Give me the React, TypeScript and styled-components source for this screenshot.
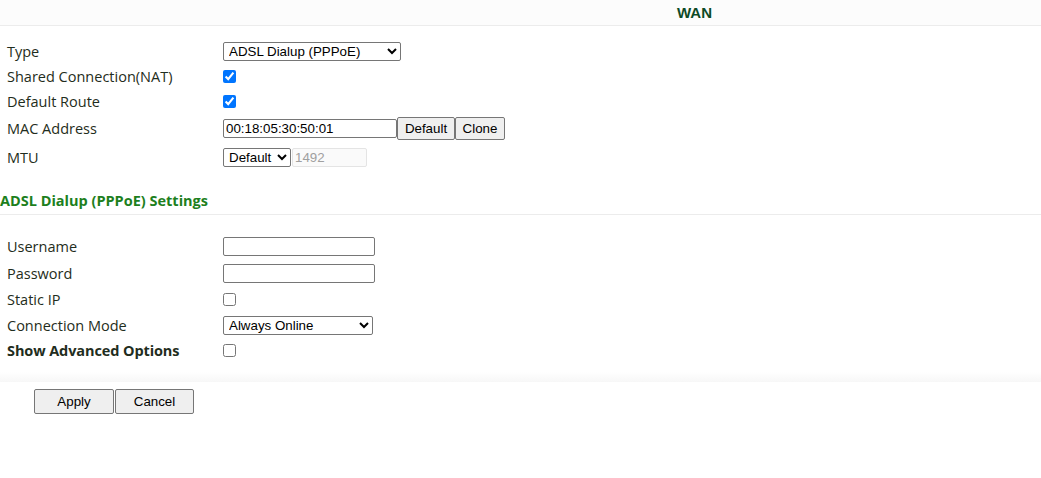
import React from "react";
import styled, { createGlobalStyle } from "styled-components";

const Global = createGlobalStyle`
  html, body { margin: 0; padding: 0; background: #fff; }
  body { font-family: "Open Sans", "Noto Sans", sans-serif; }
`;

const Page = styled.div`
  width: 1041px;
  min-height: 478px;
  display: flex;
  flex-direction: column;
`;

const Header = styled.div`
  height: 26px;
  background: #fcfcfc;
  border-bottom: 1px solid #ececec;
  display: flex;
  align-items: center;
  padding-left: 677px;
  box-sizing: border-box;
`;

const HeaderTitle = styled.h1`
  margin: 0;
  font-family: "Liberation Sans", Arial, sans-serif;
  font-size: 15px;
  font-weight: bold;
  color: #0d4a26;
`;

const Form = styled.div<{ $top: number }>`
  display: flex;
  flex-direction: column;
  padding-top: ${(p) => p.$top}px;
`;

const Row = styled.div<{ $h: number }>`
  display: grid;
  grid-template-columns: 223px 1fr;
  align-items: center;
  height: ${(p) => p.$h}px;
`;

const Label = styled.span<{ $bold?: boolean }>`
  padding-left: 7px;
  font-size: 14.5px;
  font-weight: ${(p) => (p.$bold ? 700 : 400)};
  letter-spacing: ${(p) => (p.$bold ? "-0.1px" : "0")};
  color: #1f2d20;
  white-space: nowrap;
`;

const Cell = styled.div`
  display: flex;
  align-items: center;
`;

const Select = styled.select<{ $w: number }>`
  width: ${(p) => p.$w}px;
  height: 19px;
  font-family: "Liberation Sans", Arial, sans-serif;
  font-size: 13.33px;
  color: #000;
  background: #fff;
  border: 1px solid #767676;
  border-radius: 2px;
  padding: 0 0 0 1px;
  margin: 0;
`;

const TextInput = styled.input<{ $w: number; $gap?: number }>`
  width: ${(p) => p.$w}px;
  height: 19px;
  box-sizing: border-box;
  font-family: "Liberation Sans", Arial, sans-serif;
  font-size: 13.33px;
  color: #000;
  border: 1px solid #767676;
  border-radius: 2px;
  padding: 0 2px;
  margin: 0 0 0 ${(p) => p.$gap ?? 0}px;
  &:disabled {
    color: #a0a0a0;
    background: #fafafa;
    border-color: #e4e4e4;
  }
`;

const Check = styled.input`
  width: 13px;
  height: 13px;
  margin: 0;
  accent-color: #0075ff;
`;

const Button = styled.button<{ $w: number; $h: number; $gap?: number }>`
  width: ${(p) => p.$w}px;
  height: ${(p) => p.$h}px;
  font-family: "Liberation Sans", Arial, sans-serif;
  font-size: 13.33px;
  color: #000;
  background: #efefef;
  border: 1px solid #767676;
  border-radius: 2px;
  padding: 0;
  margin: 0 0 0 ${(p) => p.$gap ?? 0}px;
`;

const SectionTitle = styled.div`
  margin-top: 14px;
  height: 28px;
  display: flex;
  align-items: center;
  border-bottom: 1px solid #ececec;
  font-size: 14.5px;
  font-weight: 700;
  color: #1d7f1d;
`;

const Footer = styled.div`
  margin-top: 10px;
  display: flex;
  flex-direction: column;
`;

const FooterBand = styled.div`
  height: 10px;
  background: linear-gradient(#ffffff, #f7f7f7);
`;

const FooterButtons = styled.div`
  padding: 7px 0 0 34px;
  display: flex;
`;

export default function App() {
  return (
    <Page>
      <Global />
      <Header>
        <HeaderTitle>WAN</HeaderTitle>
      </Header>
      <Form $top={13}>
        <Row $h={25}>
          <Label>Type</Label>
          <Cell>
            <Select $w={178} defaultValue="pppoe">
              <option value="pppoe">ADSL Dialup (PPPoE)</option>
              <option value="dhcp">DHCP</option>
              <option value="static">Static IP</option>
            </Select>
          </Cell>
        </Row>
        <Row $h={25}>
          <Label>Shared Connection(NAT)</Label>
          <Cell>
            <Check type="checkbox" defaultChecked />
          </Cell>
        </Row>
        <Row $h={25}>
          <Label>Default Route</Label>
          <Cell>
            <Check type="checkbox" defaultChecked />
          </Cell>
        </Row>
        <Row $h={29}>
          <Label>MAC Address</Label>
          <Cell>
            <TextInput $w={174} defaultValue="00:18:05:30:50:01" />
            <Button $w={58} $h={23}>Default</Button>
            <Button $w={50} $h={23}>Clone</Button>
          </Cell>
        </Row>
        <Row $h={29}>
          <Label>MTU</Label>
          <Cell>
            <Select $w={68} defaultValue="default">
              <option value="default">Default</option>
              <option value="manual">Manual</option>
            </Select>
            <TextInput $w={75} $gap={1} defaultValue="1492" disabled />
          </Cell>
        </Row>
      </Form>
      <SectionTitle>ADSL Dialup (PPPoE) Settings</SectionTitle>
      <Form $top={18}>
        <Row $h={27}>
          <Label>Username</Label>
          <Cell>
            <TextInput $w={152} defaultValue="" />
          </Cell>
        </Row>
        <Row $h={27}>
          <Label>Password</Label>
          <Cell>
            <TextInput $w={152} type="password" defaultValue="" />
          </Cell>
        </Row>
        <Row $h={25}>
          <Label>Static IP</Label>
          <Cell>
            <Check type="checkbox" />
          </Cell>
        </Row>
        <Row $h={27}>
          <Label>Connection Mode</Label>
          <Cell>
            <Select $w={150} defaultValue="always">
              <option value="always">Always Online</option>
              <option value="demand">On Demand</option>
              <option value="manual">Manual</option>
            </Select>
          </Cell>
        </Row>
        <Row $h={23}>
          <Label $bold>Show Advanced Options</Label>
          <Cell>
            <Check type="checkbox" />
          </Cell>
        </Row>
      </Form>
      <Footer>
        <FooterBand />
        <FooterButtons>
          <Button $w={80} $h={25}>Apply</Button>
          <Button $w={79} $h={25} $gap={1}>Cancel</Button>
        </FooterButtons>
      </Footer>
    </Page>
  );
}
